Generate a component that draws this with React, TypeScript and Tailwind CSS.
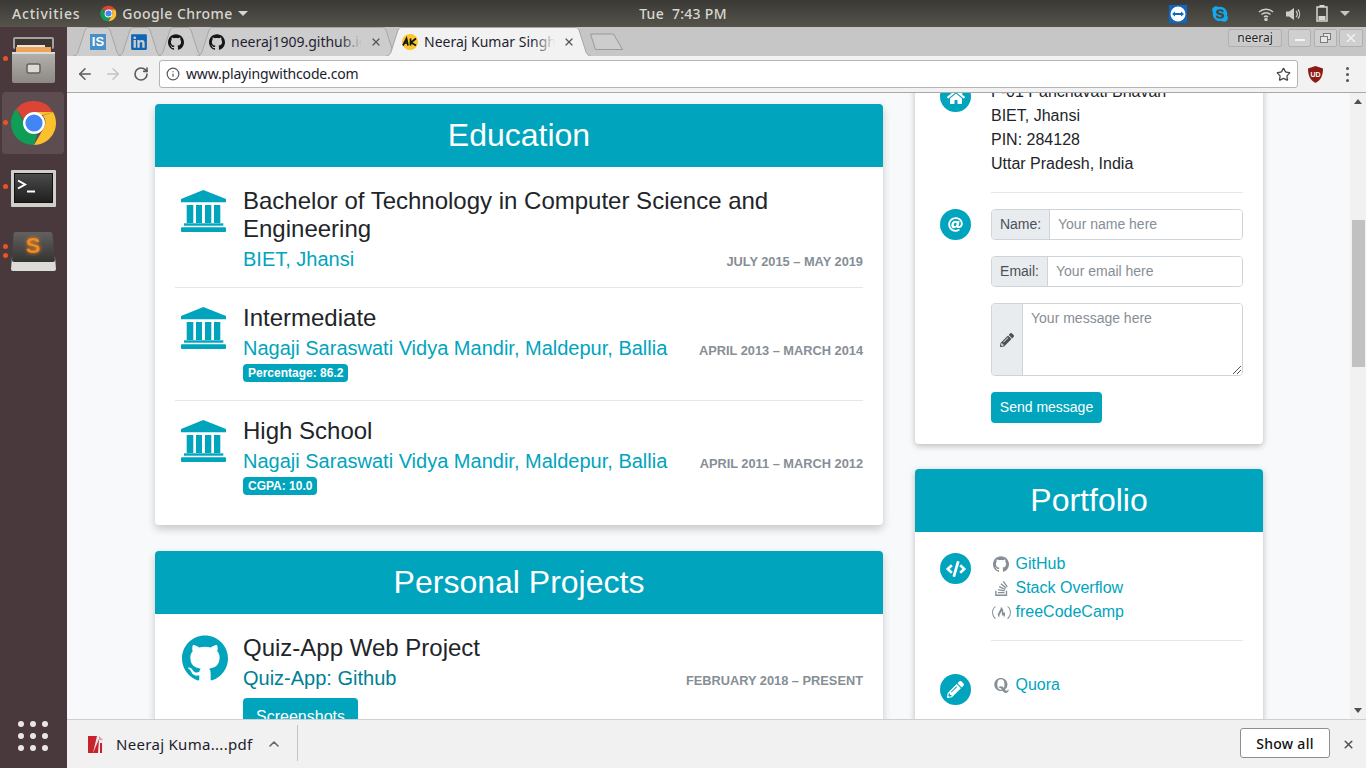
import React from 'react'
import { ArrowLeft, ArrowRight, RotateCw, Info, Star, X, ChevronUp } from 'lucide-react'
import { SiGithub } from 'react-icons/si'
import { FaHome, FaAt, FaPencilAlt, FaCode, FaStackOverflow, FaFreeCodeCamp, FaQuora, FaLinkedin, FaSkype } from 'react-icons/fa'

const ChromeLogo = ({ size }: { size: number }) => (
  <svg width={size} height={size} viewBox="0 0 48 48">
    <path d="M24 2a22 22 0 0 1 19.05 11H24a11 11 0 0 0-10.4 7.4L6.2 9.8A22 22 0 0 1 24 2z" fill="#db4437" />
    <path d="M43.05 13A22 22 0 0 1 24 46l9.5-16.5A11 11 0 0 0 33 16.500z" fill="#fbc02d" />
    <path d="M24 46A22 22 0 0 1 6.200 9.800L15.500 26a11 11 0 0 0 12 8z" fill="#0f9d58" />
    <path d="M43.050 13H24v3h9.500z" fill="#fbc02d" />
    <circle cx="24" cy="24" r="11" fill="#fff" />
    <circle cx="24" cy="24" r="8.600" fill="#4285f4" />
  </svg>
)

const UniversityIcon = () => (
  <svg width="45" height="42" viewBox="0 0 45 42" fill="#00a4bd">
    <path d="M22.300 0L45 9v3.300H0V9z" />
    <rect x="5.700" y="15" width="6.600" height="18" />
    <rect x="15" y="15" width="6" height="18" />
    <rect x="24" y="15" width="6.300" height="18" />
    <rect x="33" y="15" width="6.300" height="18" />
    <rect x="3" y="33.300" width="39.300" height="2.400" />
    <rect x="0" y="37.300" width="45" height="4.700" rx="1" />
  </svg>
)

const FilesIcon = () => (
  <svg width="43" height="46" viewBox="0 0 43 46">
    <defs>
      <linearGradient id="filesBody" x1="0" y1="0" x2="0" y2="1">
        <stop offset="0" stopColor="#b5b2ad" />
        <stop offset="1" stopColor="#8d8a85" />
      </linearGradient>
    </defs>
    <rect x="1" y="0" width="41" height="12" rx="2" fill="#a5a29e" />
    <rect x="3" y="2" width="37" height="12" fill="#3b3733" />
    <rect x="4" y="10" width="35" height="6" fill="#f0a35a" />
    <rect x="5" y="8" width="28" height="2" fill="#e9e4dc" />
    <rect x="0" y="15" width="43" height="31" rx="2" fill="url(#filesBody)" />
    <rect x="0" y="15" width="43" height="2" fill="#dedcd8" />
    <rect x="15" y="27" width="13" height="9" rx="2" fill="#dcdad6" stroke="#66635f" strokeWidth="1.500" />
  </svg>
)

const TerminalIcon = () => (
  <svg width="45" height="37" viewBox="0 0 45 37">
    <defs>
      <linearGradient id="termBody" x1="0" y1="0" x2="0" y2="1">
        <stop offset="0" stopColor="#4a4a4a" />
        <stop offset="1" stopColor="#1f1f1f" />
      </linearGradient>
    </defs>
    <rect x="0" y="0" width="45" height="37" rx="1" fill="#cfcfcc" />
    <rect x="3" y="3" width="39" height="30" fill="#111" />
    <rect x="4" y="4" width="37" height="28" fill="url(#termBody)" />
    <path d="M7 10.500L14 14.500L7 18.500" fill="none" stroke="#fff" strokeWidth="2" />
    <rect x="16" y="20.500" width="8" height="2" fill="#fff" />
  </svg>
)

const SublimeIcon = () => (
  <svg width="45" height="40" viewBox="0 0 45 40">
    <defs>
      <linearGradient id="subBody" x1="0" y1="0" x2="0" y2="1">
        <stop offset="0" stopColor="#626160" />
        <stop offset="1" stopColor="#343332" />
      </linearGradient>
    </defs>
    <path d="M1 26h43l1 12a2 2 0 0 1-2 2H2a2 2 0 0 1-2-2z" fill="#dddbd7" />
    <path d="M5 1h34q2 0 2.500 2L44 29q0 2-2 2H3q-2 0-2-2L2.500 3Q3 1 5 1z" fill="url(#subBody)" />
    <text x="22" y="22" textAnchor="middle" fontSize="22" fontWeight="bold" fill="#f58a1f" fontFamily="Liberation Sans" className="[filter:drop-shadow(0_0_2px_#f58a1f)]">S</text>
  </svg>
)

const Tab = ({
  width,
  active,
  className,
  pad,
  children,
}: {
  width: number
  active?: boolean
  className: string
  pad: string
  children: React.ReactNode
}) => (
  <div className={`relative h-[29px] shrink-0 ${className}`} style={{ width }}>
    <svg className="absolute inset-0" width={width} height={29} viewBox={`0 0 ${width} 29`}>
      <path
        d={`M0 29C3 29 4 27 5 25L12 3C13 1 14 0.500 16 0.500H${width - 16}C${width - 14} 0.500 ${width - 13} 1 ${width - 12} 3L${width - 5} 25C${width - 4} 27 ${width - 3} 29 ${width} 29`}
        fill={active ? '#f2f2f2' : '#cdcdcd'}
        stroke="#a6a6a6"
      />
    </svg>
    <div className={`relative flex items-center h-full ${pad}`}>{children}</div>
  </div>
)

const TabText = ({ text, fade }: { text: string; fade: string }) => (
  <div className="relative w-[131px] overflow-hidden whitespace-nowrap text-[14px] text-[#1f1f33] ml-[6px]">
    {text}
    <div className={`absolute right-0 top-0 bottom-0 w-[22px] bg-gradient-to-r from-transparent ${fade}`} />
  </div>
)

const TopBar = () => (
  <div className="h-[27px] shrink-0 bg-gradient-to-b from-[#3a3935] to-[#55534b] grid grid-cols-[1fr_auto_1fr] items-center text-[#d8d6d0] text-[14px] font-medium font-['Noto_Sans',sans-serif]">
    <div className="flex items-center pl-[12px]">
      <span className="tracking-[0.8px]">Activities</span>
      <span className="ml-[20px]">
        <ChromeLogo size={17} />
      </span>
      <span className="ml-[5px] tracking-[0.45px]">Google Chrome</span>
      <span className="ml-[5px] w-0 h-0 border-x-[5px] border-x-transparent border-t-[5px] border-t-[#d8d6d0]" />
    </div>
    <div className="tracking-[0.3px]">Tue&nbsp; 7:43 PM</div>
    <div className="flex items-center justify-end pr-[15px]">
      <svg width="18" height="18" viewBox="0 0 18 18">
        <rect width="18" height="18" fill="#0e67c2" />
        <circle cx="9" cy="9" r="7.500" fill="#fff" />
        <path d="M3 9l3-2.500v1.500h6V6.500L15 9l-3 2.500V10H6v1.500z" fill="#0e67c2" />
      </svg>
      <FaSkype className="ml-[24px] text-[#12a9ee]" size={18} />
      <svg className="ml-[29px]" width="16" height="14" viewBox="0 0 16 14" fill="none" stroke="#cfcdc8" strokeWidth="1.500">
        <path d="M1 5a10 10 0 0 1 14 0M3.500 7.500a6.500 6.500 0 0 1 9 0M6 10a3 3 0 0 1 4 0" />
        <circle cx="8" cy="12.500" r="1" fill="#cfcdc8" />
      </svg>
      <svg className="ml-[12px]" width="16" height="14" viewBox="0 0 16 14" fill="#cfcdc8">
        <path d="M0 4.500h3L8 1v12L3 9.500H0z" />
        <path d="M10 4a4 4 0 0 1 0 6M12 2.500a7 7 0 0 1 0 9" fill="none" stroke="#cfcdc8" strokeWidth="1.200" />
      </svg>
      <svg className="ml-[14px]" width="12" height="17" viewBox="0 0 12 17">
        <rect x="3.500" y="0" width="5" height="2" fill="#d8d6d0" />
        <rect x="1" y="2" width="10" height="14" fill="none" stroke="#d8d6d0" strokeWidth="1.500" />
        <rect x="2.500" y="11" width="7" height="4" fill="#d8d6d0" />
      </svg>
      <span className="ml-[12px] mr-[1px] w-0 h-0 border-x-[5px] border-x-transparent border-t-[5px] border-t-[#c8c6c0]" />
    </div>
  </div>
)

const Dock = () => (
  <div className="w-[67px] shrink-0 bg-[#49383c] flex flex-col">
    <div className="relative h-[64px] flex items-center justify-center pt-[1px]">
      <span className="absolute left-[3px] top-[29px] w-[5px] h-[5px] rounded-full bg-[#e95420]" />
      <FilesIcon />
    </div>
    <div className="relative h-[64px] flex items-center justify-center">
      <div className="absolute left-[2px] top-[1px] w-[62px] h-[62px] rounded-[4px] bg-[#5d4c50]" />
      <span className="absolute left-[3px] top-[29px] w-[5px] h-[5px] rounded-full bg-[#e95420]" />
      <span className="relative">
        <ChromeLogo size={48} />
      </span>
    </div>
    <div className="relative h-[64px] flex items-center justify-center pt-[2px]">
      <span className="absolute left-[3px] top-[29px] w-[5px] h-[5px] rounded-full bg-[#e95420]" />
      <TerminalIcon />
    </div>
    <div className="relative h-[64px] flex items-center justify-center">
      <span className="absolute left-[3px] top-[25px] w-[5px] h-[5px] rounded-full bg-[#e95420]" />
      <span className="absolute left-[3px] top-[34px] w-[5px] h-[5px] rounded-full bg-[#e95420]" />
      <SublimeIcon />
    </div>
    <div className="mt-auto mb-[17px] ml-[18px] grid grid-cols-[6px_6px_6px] gap-[6px]">
      {Array.from({ length: 9 }).map((_, i) => (
        <span key={i} className="w-[6px] h-[6px] rounded-full bg-[#e8e6e6]" />
      ))}
    </div>
  </div>
)

const TabStrip = () => (
  <div className="h-[29px] shrink-0 bg-[#c6c6c6] flex items-start pl-[6px] font-['Noto_Sans',sans-serif] relative">
    <Tab width={49} className="" pad="pl-[17px]">
      <div className="w-[16px] h-[16px] bg-[#4a90c8] text-white text-[13px] font-bold leading-[16px] text-center font-['Liberation_Sans',sans-serif]">IS</div>
    </Tab>
    <Tab width={44} className="-ml-[4px]" pad="pl-[12px]">
      <FaLinkedin className="text-[#0f66b4]" size={18} />
    </Tab>
    <Tab width={45} className="-ml-[4px]" pad="pl-[10px]">
      <SiGithub className="text-[#161616]" size={16} />
    </Tab>
    <Tab width={201} className="-ml-[6px]" pad="pl-[12px]">
      <SiGithub className="text-[#161616] shrink-0" size={16} />
      <TabText text="neeraj1909.github.io" fade="to-[#cdcdcd]" />
      <X className="ml-[8px] text-[#555]" size={12} strokeWidth={2.500} />
    </Tab>
    <Tab width={205} active className="-ml-[12px] z-10" pad="pl-[16px]">
      <svg className="shrink-0" width="16" height="16" viewBox="0 0 16 16">
        <circle cx="8" cy="8" r="8" fill="#fbc52d" />
        <path d="M1 11.500L4.500 4.500 6 11.500M2.500 9h3.500M8.500 4.500v7M14 4.500L9 8.500l5 3" fill="none" stroke="#111" strokeWidth="1.700" />
      </svg>
      <TabText text="Neeraj Kumar Singh" fade="to-[#f2f2f2]" />
      <X className="ml-[8px] text-[#555]" size={12} strokeWidth={2.500} />
    </Tab>
    <svg className="-ml-[2px] mt-[6px] shrink-0" width="35" height="18" viewBox="0 0 35 18">
      <path d="M1.500 1h23l9 15.500H6.500z" fill="#cdcdcd" stroke="#9a9a9a" strokeLinejoin="round" />
    </svg>
    <div className="ml-auto flex items-start pt-[2px] pr-[3px]">
      <div className="w-[54px] h-[18px] mr-[6px] border border-[#b0b0b0] rounded-[2px] bg-[#c9c9c9] text-[12px] leading-[16px] text-center text-[#222] [text-shadow:0_0_2px_#fff]">neeraj</div>
      <div className="w-[23px] h-[18px] mr-[3px] border border-[#b0b0b0] rounded-[2px] bg-[#cfcfcf] flex items-center justify-center">
        <div className="w-[10px] h-[2px] mt-[3px] bg-[#f4f4f4]" />
      </div>
      <div className="w-[23px] h-[18px] mr-[2px] border border-[#b0b0b0] rounded-[2px] bg-[#cfcfcf] flex items-center justify-center">
        <svg width="11" height="10" viewBox="0 0 11 10" fill="#e6e6e6" stroke="#7b7b7b">
          <rect x="3.500" y="0.500" width="7" height="6" />
          <rect x="0.500" y="3.500" width="7" height="6" />
        </svg>
      </div>
      <div className="w-[24px] h-[18px] border border-[#b0b0b0] rounded-[2px] bg-[#cfcfcf] flex items-center justify-center">
        <X className="text-[#f4f4f4]" size={14} strokeWidth={2.500} />
      </div>
    </div>
  </div>
)

const Toolbar = () => (
  <div className="h-[37px] shrink-0 bg-[#f2f2f2] border-b border-[#a9a9a9] flex items-center font-['Noto_Sans',sans-serif]">
    <ArrowLeft className="ml-[9px] text-[#5a5a5a]" size={18} strokeWidth={2} />
    <ArrowRight className="ml-[10px] text-[#c4c4c4]" size={18} strokeWidth={2} />
    <RotateCw className="ml-[11px] text-[#5a5a5a]" size={16} strokeWidth={2.400} />
    <div className="ml-[10px] w-[1139px] h-[28px] bg-white border border-[#b4b4b4] rounded-[3px] flex items-center pl-[6px] pr-[6px]">
      <Info className="text-[#555]" size={14} strokeWidth={2} />
      <span className="ml-[6px] mb-[1px] text-[14px] tracking-[-0.17px] text-[#1c1c2c]">www.playingwithcode.com</span>
      <Star className="ml-auto text-[#444]" size={15} strokeWidth={2} />
    </div>
    <svg className="ml-[10px]" width="15" height="17" viewBox="0 0 15 17">
      <path d="M7.500 0L15 2.500c0 7-2 11.500-7.500 14.500C2 14 0 9.500 0 2.500z" fill="#8c1c13" />
      <text x="7.500" y="10.500" textAnchor="middle" fontSize="7" fontWeight="bold" fill="#fff" fontFamily="Liberation Sans">UD</text>
    </svg>
    <div className="ml-[23px] flex flex-col gap-[3px]">
      <span className="w-[3px] h-[3px] bg-[#555] rounded-full" />
      <span className="w-[3px] h-[3px] bg-[#555] rounded-full" />
      <span className="w-[3px] h-[3px] bg-[#555] rounded-full" />
    </div>
  </div>
)

const CardHeader = ({ title }: { title: string }) => (
  <div className="h-[63px] pb-[2px] bg-[#00a4bd] rounded-t-[4px] flex items-center justify-center text-white text-[32px]">{title}</div>
)

const DateText = ({ text }: { text: string }) => (
  <div className="text-[12.800px] font-bold text-[#868e96] uppercase leading-[30px] translate-y-[3px]">{text}</div>
)

const Item = ({
  title,
  sub,
  date,
  badge,
  className,
}: {
  title: string
  sub: string
  date: string
  badge?: string
  className: string
}) => (
  <div className={`flex ${className}`}>
    <div className="w-[68px] shrink-0 pl-[6px] pt-[3px]">
      <UniversityIcon />
    </div>
    <div className="flex-1">
      <div className="text-[24px] leading-[28px] text-[#212529]">{title}</div>
      <div className="flex justify-between items-end pt-[1px]">
        <div className="text-[20px] leading-[30px] text-[#00a4bd]">{sub}</div>
        <DateText text={date} />
      </div>
      {badge && (
        <div className="mt-[1px] w-fit h-[18px] px-[5px] rounded-[4px] bg-[#00a4bd] text-white text-[12px] font-bold leading-[18px]">{badge}</div>
      )}
    </div>
  </div>
)

const Circle = ({ children, className }: { children: React.ReactNode; className?: string }) => (
  <div className={`w-[31px] h-[31px] rounded-full bg-[#00a4bd] text-white flex items-center justify-center shrink-0 ${className ?? ''}`}>{children}</div>
)

const LinkRow = ({ icon, label }: { icon: React.ReactNode; label: string }) => (
  <div className="flex items-center h-[24px]">
    <span className="w-[20px] flex justify-center text-[#868e96] mr-[4.500px]">{icon}</span>
    <span className="text-[#00a4bd] text-[16px]">{label}</span>
  </div>
)

const InputRow = ({ label, placeholder, labelWidth }: { label: string; placeholder: string; labelWidth: string }) => (
  <div className="flex h-[31px] rounded-[4px] border border-[#ced4da] overflow-hidden text-[14px]">
    <div className={`${labelWidth} bg-[#e9ecef] border-r border-[#ced4da] flex items-center justify-center text-[#495057]`}>{label}</div>
    <div className="flex-1 flex items-center pl-[8px] text-[#868e96] bg-white">{placeholder}</div>
  </div>
)

const Page = () => (
  <div className="flex-1 min-h-0 relative bg-[#f8f9fa] overflow-hidden flex font-['Liberation_Sans',sans-serif]">
    <div className="flex-1 flex items-start pl-[88px]">
      <div className="w-[728px] shrink-0 pt-[11px] flex flex-col gap-[26px]">
        <div className="bg-white rounded-[4px] shadow-[0_4px_8px_rgba(0,0,0,0.2)]">
          <CardHeader title="Education" />
          <div className="px-[20px] pt-[20px] pb-[30px]">
            <Item
              title="Bachelor of Technology in Computer Science and Engineering"
              sub="BIET, Jhansi"
              date="July 2015 – May 2019"
              className="pb-[13px] border-b border-[#e5e7e9]"
            />
            <Item
              title="Intermediate"
              sub="Nagaji Saraswati Vidya Mandir, Maldepur, Ballia"
              date="April 2013 – March 2014"
              badge="Percentage: 86.2"
              className="pt-[16px] pb-[18px] border-b border-[#e5e7e9]"
            />
            <Item
              title="High School"
              sub="Nagaji Saraswati Vidya Mandir, Maldepur, Ballia"
              date="April 2011 – March 2012"
              badge="CGPA: 10.0"
              className="pt-[16px]"
            />
          </div>
        </div>
        <div className="bg-white rounded-[4px] shadow-[0_4px_8px_rgba(0,0,0,0.2)] h-[300px]">
          <CardHeader title="Personal Projects" />
          <div className="px-[20px] pt-[20px] flex">
            <div className="w-[68px] shrink-0 pl-[7px] pt-[1px]">
              <SiGithub className="text-[#00a4bd]" size={46} />
            </div>
            <div className="flex-1">
              <div className="text-[24px] leading-[28px] text-[#212529]">Quiz-App Web Project</div>
              <div className="flex justify-between items-end pt-[1px]">
                <div className="text-[20px] leading-[30px] text-[#007f93]">Quiz-App: Github</div>
                <DateText text="February 2018 – Present" />
              </div>
              <div className="mt-[5px] w-[115px] h-[38px] rounded-[4px] bg-[#00a4bd] text-white text-[16px] flex items-center justify-center">Screenshots</div>
            </div>
          </div>
        </div>
      </div>
      <div className="w-[348px] shrink-0 ml-[32px] -mt-[13px] flex flex-col gap-[25px]">
        <div className="bg-white rounded-b-[4px] shadow-[0_2px_6px_rgba(0,0,0,0.25)] px-[20px] pb-[21px] text-[16px] text-[#212529]">
          <div className="flex">
            <div className="w-[56px] pl-[5px] pt-[1px]">
              <Circle>
                <FaHome size={18} />
              </Circle>
            </div>
            <div className="flex-1 leading-[24px] pb-[16px] border-b border-[#e5e7e9]">
              <div>F-01 Panchavati Bhavan</div>
              <div>BIET, Jhansi</div>
              <div>PIN: 284128</div>
              <div>Uttar Pradesh, India</div>
            </div>
          </div>
          <div className="flex pt-[16px]">
            <div className="w-[56px] pl-[5px]">
              <Circle>
                <FaAt size={15} />
              </Circle>
            </div>
            <div className="flex-1 flex flex-col gap-[16px]">
              <InputRow label="Name:" placeholder="Your name here" labelWidth="w-[58px]" />
              <InputRow label="Email:" placeholder="Your email here" labelWidth="w-[56px]" />
              <div className="flex h-[73px] rounded-[4px] border border-[#ced4da] overflow-hidden text-[14px] relative">
                <div className="w-[31px] bg-[#e9ecef] border-r border-[#ced4da] flex items-center justify-center text-[#495057]">
                  <FaPencilAlt size={14} />
                </div>
                <div className="flex-1 pl-[8px] pt-[4px] text-[#868e96] bg-white">Your message here</div>
                <svg className="absolute right-[1px] bottom-[1px]" width="9" height="9" viewBox="0 0 9 9" stroke="#555" strokeWidth="1">
                  <path d="M1 9L9 1M5 9L9 5" />
                </svg>
              </div>
              <div className="w-[111px] h-[31px] rounded-[4px] bg-[#00a4bd] text-white text-[14px] flex items-center justify-center">Send message</div>
            </div>
          </div>
        </div>
        <div className="bg-white rounded-[4px] shadow-[0_2px_6px_rgba(0,0,0,0.25)] h-[300px]">
          <CardHeader title="Portfolio" />
          <div className="px-[20px] pt-[20px]">
            <div className="flex">
              <div className="w-[56px] pl-[5px] pt-[1px]">
                <Circle>
                  <FaCode size={20} />
                </Circle>
              </div>
              <div className="flex-1 pb-[16px] border-b border-[#e5e7e9]">
                <LinkRow icon={<SiGithub size={16} />} label="GitHub" />
                <LinkRow icon={<FaStackOverflow size={17} />} label="Stack Overflow" />
                <LinkRow icon={<FaFreeCodeCamp size={19} />} label="freeCodeCamp" />
              </div>
            </div>
            <div className="flex pt-[33px]">
              <div className="w-[56px] pl-[5px]">
                <Circle>
                  <FaPencilAlt size={17} />
                </Circle>
              </div>
              <div className="flex-1 -mt-[1px]">
                <LinkRow icon={<FaQuora size={17} />} label="Quora" />
              </div>
            </div>
          </div>
        </div>
      </div>
    </div>
    <div className="w-[16px] shrink-0 bg-[#f1f1f1] flex flex-col items-center">
      <span className="mt-[6px] w-0 h-0 border-x-[4px] border-x-transparent border-b-[5px] border-b-[#505050]" />
      <div className="mt-[116px] ml-[1px] w-[13px] h-[147px] bg-[#c1c1c1]" />
      <span className="mt-auto mb-[6px] w-0 h-0 border-x-[4px] border-x-transparent border-t-[5px] border-t-[#505050]" />
    </div>
  </div>
)

const DownloadBar = () => (
  <div className="h-[49px] shrink-0 bg-[#f1f1f1] border-t border-[#cfcfcf] flex items-center font-['Noto_Sans',sans-serif]">
    <svg className="ml-[21px]" width="15" height="17" viewBox="0 0 15 17">
      <path d="M0 0h11l4 4v13H0z" fill="#ececec" />
      <path d="M0 0h9L5 17H0z" fill="#c8232c" />
      <path d="M5 17L11 3l-1 14z" fill="#c8232c" />
      <path d="M11 0l4 4h-4z" fill="#d9a0a3" />
      <path d="M12 7h2v10h-2z" fill="#c8232c" />
    </svg>
    <span className="ml-[13px] text-[15px] tracking-[0.3px] text-[#1c1c2c] whitespace-nowrap">Neeraj Kuma....pdf</span>
    <ChevronUp className="ml-[13px] text-[#666]" size={16} strokeWidth={2.400} />
    <div className="ml-[15px] w-px h-[36px] mb-[2px] bg-[#c4c4c4]" />
    <div className="ml-auto w-[90px] h-[30px] mb-[2px] bg-white border border-[#8e8e8e] rounded-[3px] flex items-center justify-center text-[14px] tracking-[0.3px] font-medium text-[#111]">Show all</div>
    <X className="ml-[12px] mr-[11px] text-[#555]" size={13} strokeWidth={3} />
  </div>
)

export default function App() {
  return (
    <div className="w-[1366px] h-[768px] overflow-hidden flex flex-col">
      <TopBar />
      <div className="flex-1 min-h-0 flex">
        <Dock />
        <div className="flex-1 min-w-0 flex flex-col">
          <TabStrip />
          <Toolbar />
          <Page />
          <DownloadBar />
        </div>
      </div>
    </div>
  )
}
